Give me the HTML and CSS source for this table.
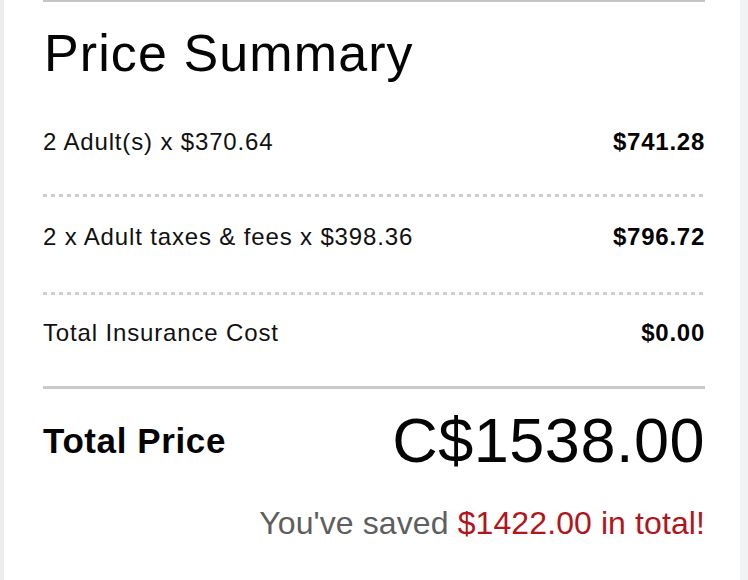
FILE: index.html
```html
<!DOCTYPE html>
<html lang="en">
<head>
<meta charset="utf-8">
<title>Price Summary</title>
<link rel="stylesheet" href="styles.css">
</head>
<body>
<div class="frame">
  <div class="edge-left"></div>
  <main class="summary">
    <h1 class="title">Price Summary</h1>
    <div class="row row-first">
      <span class="label">2 Adult(s) x $370.64</span>
      <span class="amount">$741.28</span>
    </div>
    <div class="dots"></div>
    <div class="row">
      <span class="label">2 x Adult taxes &amp; fees x $398.36</span>
      <span class="amount">$796.72</span>
    </div>
    <div class="dots"></div>
    <div class="row row-last">
      <span class="label">Total Insurance Cost</span>
      <span class="amount">$0.00</span>
    </div>
    <div class="rule"></div>
    <div class="total">
      <span class="total-label">Total Price</span>
      <span class="total-amount">C$1538.00</span>
    </div>
    <p class="saved">You've saved <span class="saved-amount">$1422.00 in total!</span></p>
  </main>
  <div class="edge-right"></div>
</div>
</body>
</html>
```

FILE: styles.css
```css
html, body {
  margin: 0;
  padding: 0;
  background: #ffffff;
}

body {
  font-family: "Liberation Sans", Arial, Helvetica, sans-serif;
  color: #0a0a0a;
}

.frame {
  display: flex;
  width: 748px;
  height: 580px;
  overflow: hidden;
}

.edge-left {
  width: 4px;
  flex: none;
  background: #ececee;
}

.edge-right {
  width: 8px;
  flex: none;
  margin-left: auto;
  background: #f1f2f4;
}

.summary {
  width: 662px;
  margin-left: 39px;
  border-top: 2px solid #c6c6c6;
  display: flex;
  flex-direction: column;
}

.title {
  margin: 25px 0 0 1px;
  font-size: 52px;
  line-height: 52px;
  font-weight: 400;
  letter-spacing: 1.1px;
  color: #050505;
}

.row {
  display: flex;
  justify-content: space-between;
  align-items: center;
  font-size: 24px;
  line-height: 24px;
  padding: 28px 0 43px;
}

.row-first {
  padding-top: 51px;
  padding-bottom: 40px;
}

.row-last {
  padding-top: 26px;
  padding-bottom: 41px;
}

.label {
  color: #111111;
  letter-spacing: 0.85px;
}

.amount {
  font-weight: 700;
  letter-spacing: 0.75px;
  color: #050505;
}

.dots {
  height: 3px;
  background: repeating-linear-gradient(to right, #cdcdcd 0 4px, transparent 4px 8px);
}

.rule {
  height: 3px;
  background: #c9c9c9;
}

.total {
  display: flex;
  justify-content: space-between;
  align-items: center;
  padding-top: 20px;
}

.total-label {
  font-size: 35px;
  line-height: 35px;
  font-weight: 700;
  letter-spacing: 0.6px;
  color: #050505;
}

.total-amount {
  font-size: 63px;
  line-height: 63px;
  font-weight: 400;
  letter-spacing: 0.5px;
  color: #050505;
}

.saved {
  margin: 35px 0 0;
  text-align: right;
  font-size: 32px;
  line-height: 32px;
  letter-spacing: 0.1px;
  color: #5e5e5e;
}

.saved-amount {
  color: #b0161c;
}
```
